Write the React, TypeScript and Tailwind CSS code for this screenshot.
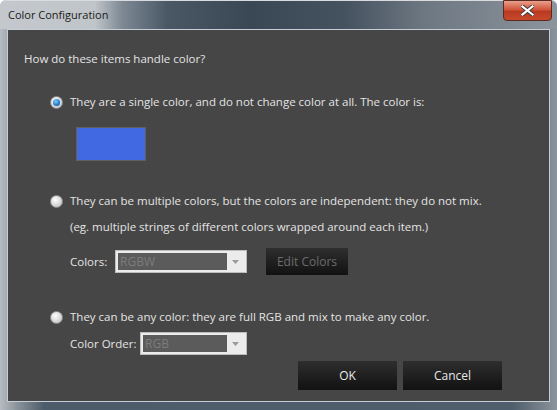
import React from "react";

const font = { fontFamily: '"Open Sans", "Noto Sans", sans-serif' };

function Radio({ checked }: { checked?: boolean }) {
  return (
    <span className="w-[13px] h-[13px] rounded-full border border-[#8f8f8f] bg-[radial-gradient(circle_at_40%_35%,#ffffff,#d4d4d4_60%,#b0b0b0)] flex items-center justify-center shrink-0">
      {checked && (
        <span className="w-[7px] h-[7px] rounded-full bg-[radial-gradient(circle_at_40%_35%,#7fd0ff,#1c78c8_60%,#0a4c8c)]" />
      )}
    </span>
  );
}

function Combo({ value, width }: { value: string; width: string }) {
  return (
    <div className={`${width} h-[23px] bg-[#ececec] border border-[#bdbdbd] flex items-center p-[2px]`}>
      <div className="flex-1 h-full bg-[#5b5b5b] flex items-center pl-[2px] text-[#7c7c7c] text-[12px]">{value}</div>
      <div className="w-[17px] h-full flex items-center justify-center">
        <svg width="7" height="4" viewBox="0 0 7 4"><path d="M0 0h7L3.5 4z" fill="#9a9a9a" /></svg>
      </div>
    </div>
  );
}

function DarkButton({ children, width, disabled }: { children: React.ReactNode; width: string; disabled?: boolean }) {
  return (
    <div
      className={`${width} flex items-center justify-center bg-[linear-gradient(#2e2e2e,#121212)] text-[12px] ${
        disabled ? "text-[#6c6c6c] h-[27px]" : "text-[#e8e8e8] h-[29px]"
      }`}
    >
      {children}
    </div>
  );
}

export default function App() {
  return (
    <div
      style={font}
      className="w-[557px] h-[410px] overflow-hidden flex flex-col bg-[linear-gradient(90deg,#b7bcc2_0%,#8a939c_3%,#4d5c6a_8%,#4f5e6c_92%,#8b949c_100%)] rounded-t-[6px]"
    >
      {/* title bar */}
      <div className="h-[29px] flex items-start bg-[linear-gradient(90deg,#c4c8cc_0%,#c0c5c9_17%,#7d8893_22%,#4a5866_30%,#3a4856_45%,#45525f_62%,#6d7782_76%,#8c949c_100%)] shrink-0 border-t border-[#d8dce0] rounded-t-[6px]">
        <div className="pl-[8px] pt-[6px] text-[11px] text-[#1a1a1a]">Color Configuration</div>
        <div className="flex-1" />
        <div className="mr-[5px] mt-[-1px] w-[49px] h-[21px] rounded-b-[4px] border border-[#5a2a20] bg-[linear-gradient(#e8a08c_0%,#d2553c_45%,#b83a20_55%,#c9482c_100%)] flex items-center justify-center">
          <svg width="13" height="11" viewBox="0 0 13 11">
            <path d="M1 1L12 10M12 1L1 10" stroke="#3a3a3a" strokeWidth="4" strokeLinecap="square" />
            <path d="M1.5 1.5L11.5 9.5M11.5 1.5L1.5 9.5" stroke="#ffffff" strokeWidth="2.2" strokeLinecap="square" />
          </svg>
        </div>
      </div>
      {/* content */}
      <div className="mx-[7px] h-[373px] border border-[#c5ced6] bg-[#464646] flex flex-col text-[#e4e4e4] text-[11.5px] leading-[16px]">
        <div className="pl-[16px] mt-[21px]">How do these items handle color?</div>
        <div className="pl-[42px] mt-[27px] flex items-center gap-[7px]">
          <Radio checked />
          <span>They are a single color, and do not change color at all. The color is:</span>
        </div>
        <div className="ml-[68px] mt-[17px] w-[70px] h-[34px] border border-[#606060] bg-[#4169e1]" />
        <div className="pl-[42px] mt-[32px] flex items-center gap-[7px]">
          <Radio />
          <span>They can be multiple colors, but the colors are independent: they do not mix.</span>
        </div>
        <div className="pl-[62px] mt-[10px]">(eg. multiple strings of different colors wrapped around each item.)</div>
        <div className="pl-[62px] mt-[13px] flex items-center">
          <span className="w-[45px]">Colors:</span>
          <Combo value="RGBW" width="w-[132px]" />
          <div className="w-[19px]" />
          <DarkButton width="w-[82px]" disabled>
            Edit Colors
          </DarkButton>
        </div>
        <div className="pl-[42px] mt-[34px] flex items-center gap-[7px]">
          <Radio />
          <span>They can be any color: they are full RGB and mix to make any color.</span>
        </div>
        <div className="pl-[62px] mt-[7px] flex items-center">
          <span className="w-[70px]">Color Order:</span>
          <Combo value="RGB" width="w-[107px]" />
        </div>
        <div className="mt-[6px] flex justify-end pr-[47px] gap-[6px]">
          <DarkButton width="w-[99px]">OK</DarkButton>
          <DarkButton width="w-[99px]">Cancel</DarkButton>
        </div>
      </div>
    </div>
  );
}
